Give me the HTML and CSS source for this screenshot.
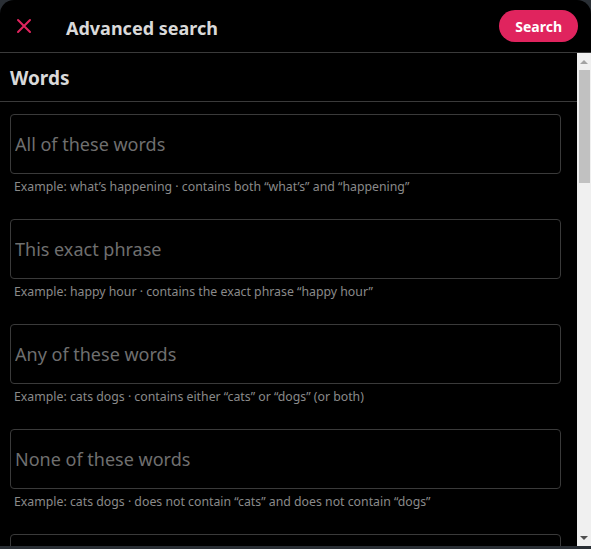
FILE: index.html
```html
<!DOCTYPE html>
<html lang="en">
<head>
  <meta charset="UTF-8">
  <title>Advanced search</title>
  <link rel="stylesheet" href="styles.css">
</head>
<body>
  <div class="modal">
    <div class="header">
      <button class="close" title="Close">
        <svg width="16" height="16" viewBox="0 0 16 16"><path d="M2 2 L14 14 M14 2 L2 14" stroke="#e0245e" stroke-width="2" stroke-linecap="round"/></svg>
      </button>
      <h2 class="title">Advanced search</h2>
      <button class="search-btn">Search</button>
    </div>

    <div class="main">
      <div class="content">
        <div class="section-title">Words</div>

        <div class="field">
          <input type="text" placeholder="All of these words">
          <div class="hint">Example: what’s happening · contains both “what’s” and “happening”</div>
        </div>
        <div class="field">
          <input type="text" placeholder="This exact phrase">
          <div class="hint">Example: happy hour · contains the exact phrase “happy hour”</div>
        </div>
        <div class="field">
          <input type="text" placeholder="Any of these words">
          <div class="hint">Example: cats dogs · contains either “cats” or “dogs” (or both)</div>
        </div>
        <div class="field">
          <input type="text" placeholder="None of these words">
          <div class="hint">Example: cats dogs · does not contain “cats” and does not contain “dogs”</div>
        </div>
        <div class="field">
          <input type="text">
        </div>
      </div>

      <div class="scrollbar">
        <div class="sb-btn"><span class="arrow up"></span></div>
        <div class="sb-track"><div class="sb-thumb"></div></div>
        <div class="sb-btn"><span class="arrow down"></span></div>
      </div>
    </div>
  </div>
</body>
</html>
```

FILE: styles.css
```css
body {
  margin: 0;
  background: #2a2f35;
  font-family: "Noto Sans", "Open Sans", Arial, sans-serif;
}
.modal {
  height: 546px;
  background: #000;
  border-radius: 14px 14px 0 0;
  display: flex;
  flex-direction: column;
  overflow: hidden;
}
.header {
  height: 52px;
  flex: none;
  display: flex;
  align-items: center;
  border-bottom: 1px solid #3a3a3a;
  padding: 0 13px 0 16px;
}
.close {
  width: 16px;
  height: 16px;
  padding: 0;
  border: none;
  background: none;
  display: flex;
}
.title {
  margin: 3px 0 0 34px;
  font-size: 18px;
  font-weight: bold;
  color: #d9d9d9;
  flex: 1;
}
.search-btn {
  height: 32px;
  padding: 0 16px;
  border: none;
  border-radius: 16px;
  background: #e0245e;
  color: #fff;
  font-family: inherit;
  font-weight: bold;
  font-size: 14px;
  cursor: pointer;
}
.main {
  flex: 1;
  display: flex;
  min-height: 0;
}
.content {
  flex: 1;
  overflow: hidden;
}
.section-title {
  height: 48px;
  line-height: 50px;
  padding-left: 10px;
  font-size: 19px;
  font-weight: bold;
  color: #d9d9d9;
  border-bottom: 1px solid #3a3a3a;
  margin-bottom: 12px;
}
.field {
  margin: 0 16px 24px 10px;
}
.field input {
  display: block;
  box-sizing: border-box;
  width: 100%;
  height: 60px;
  padding: 0 4px;
  background: #000;
  border: 1px solid #3a3a3a;
  border-radius: 4px;
  font-family: inherit;
  font-size: 18px;
  color: #d9d9d9;
  outline: none;
}
.field input::placeholder {
  color: #6f6f6f;
}
.hint {
  margin-top: 4px;
  padding-left: 4px;
  font-size: 12.3px;
  line-height: 17px;
  color: #8a8a8a;
}
.scrollbar {
  width: 14px;
  flex: none;
  background: #f0f0f0;
  display: flex;
  flex-direction: column;
}
.sb-btn {
  height: 17px;
  display: flex;
  align-items: center;
  justify-content: center;
}
.arrow {
  width: 0;
  height: 0;
  border-left: 4px solid transparent;
  border-right: 4px solid transparent;
}
.arrow.up { border-bottom: 4px solid #a3a3a3; }
.arrow.down { border-top: 4px solid #505050; }
.sb-track {
  flex: 1;
  padding: 0 1px 0 2px;
}
.sb-thumb {
  height: 113px;
  background: #c1c1c1;
}
```
